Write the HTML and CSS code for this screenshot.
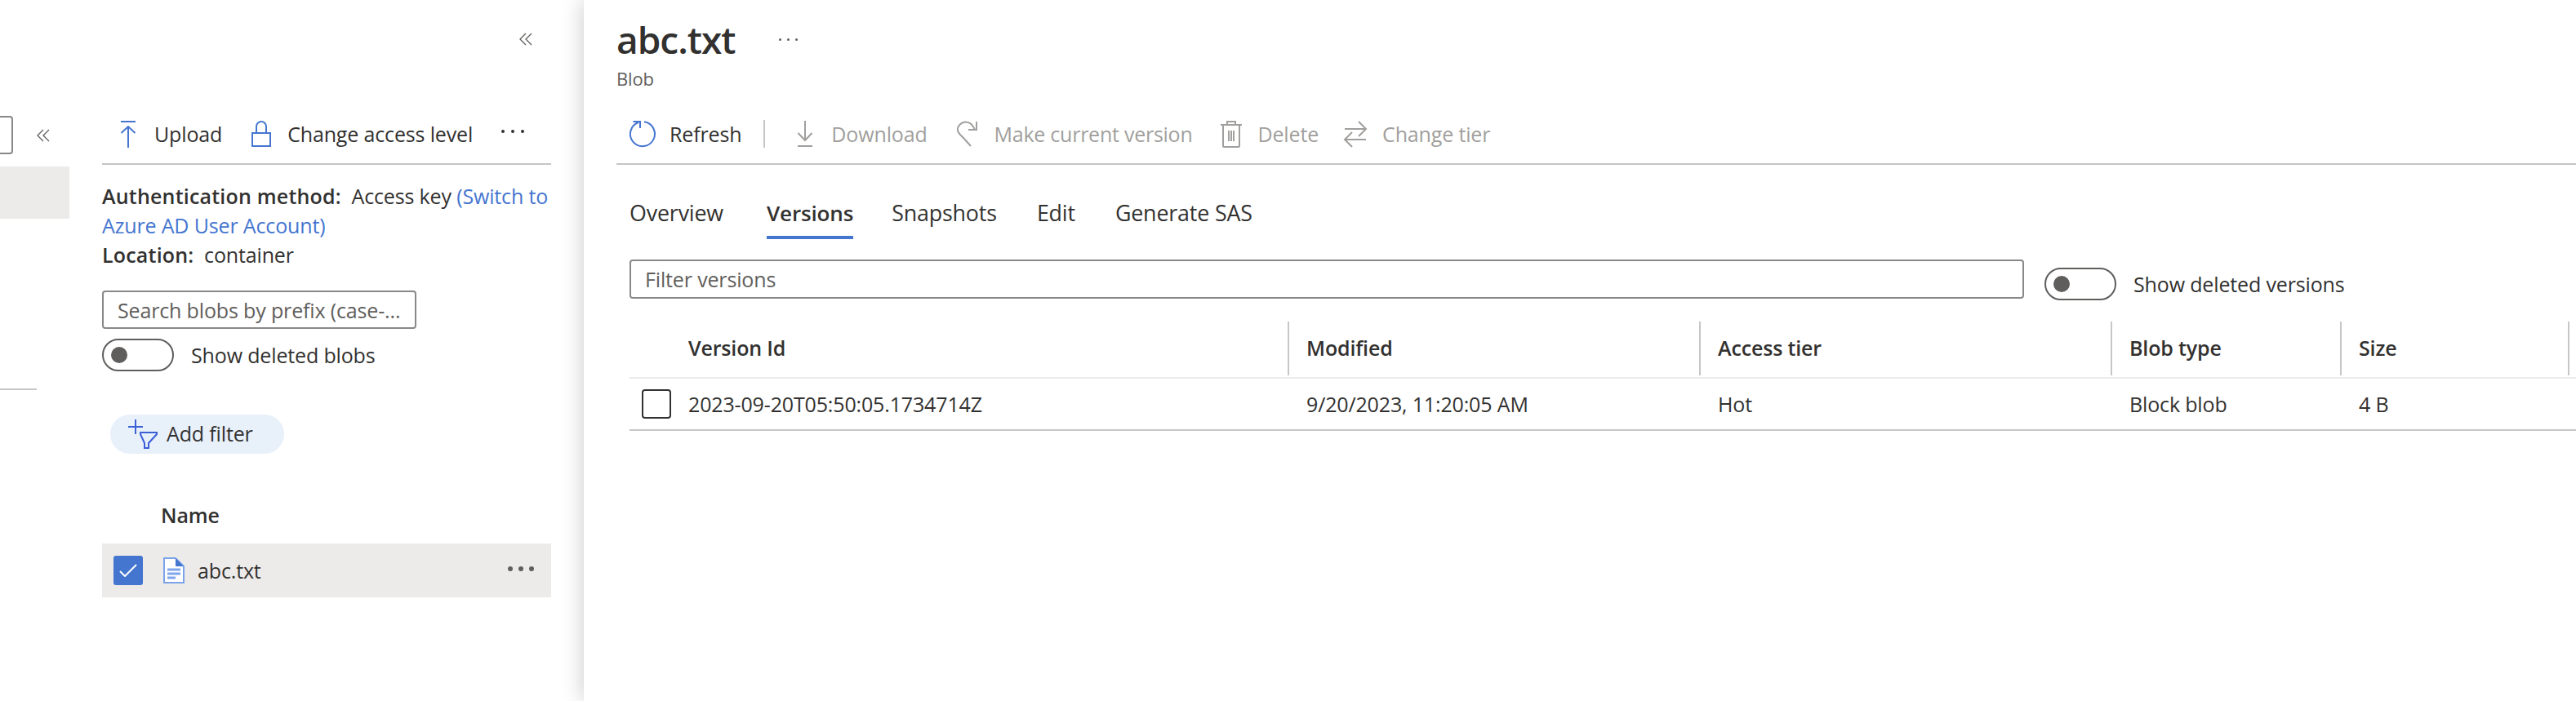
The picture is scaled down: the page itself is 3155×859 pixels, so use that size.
FILE: index.html
```html
<!DOCTYPE html>
<html lang="en">
<head>
<meta charset="utf-8">
<title>abc.txt</title>
<link rel="stylesheet" href="styles.css">
</head>
<body>
<div class="app">
  <nav class="nav">
    <div class="nav-top">
      <div class="nav-search"></div>
      <svg class="chev nav-chev" width="16" height="16" viewBox="0 0 16 16"><path d="M8 1 1 8l7 7M15 1 8 8l7 7"/></svg>
    </div>
    <div class="nav-selected"></div>
    <div class="nav-divider"></div>
  </nav>

  <section class="blobs">
    <div class="blobs-head">
      <svg class="chev" width="16" height="16" viewBox="0 0 16 16"><path d="M8 1 1 8l7 7M15 1 8 8l7 7"/></svg>
    </div>
    <div class="toolbar blobs-toolbar">
      <div class="tool">
        <svg class="ico ico-blue" width="20" height="34" viewBox="0 0 20 34"><path d="M1 2h18M10 8v26M1.500 16 10 8l8.500 8"/></svg>
        <span>Upload</span>
      </div>
      <div class="tool">
        <svg class="ico ico-blue" width="24" height="34" viewBox="0 0 24 34"><path d="M1 16h22v16H1zM6 16V8a6 6 0 0 1 12 0v8"/></svg>
        <span>Change access level</span>
      </div>
      <div class="tool-more">
        <i class="dot-s"></i><i class="dot-s"></i><i class="dot-s"></i>
      </div>
    </div>
    <div class="meta">
      <div><b>Authentication method:</b>&nbsp; Access key <a class="link">(Switch to</a></div>
      <div><a class="link">Azure AD User Account)</a></div>
      <div><b>Location:</b>&nbsp; container</div>
    </div>
    <div class="field search-field">Search blobs by prefix (case-...</div>
    <div class="toggle-row">
      <div class="toggle"><i class="knob"></i></div>
      <span>Show deleted blobs</span>
    </div>
    <div class="pill">
      <svg class="ico-filter" width="38" height="36" viewBox="0 0 38 36"><path d="M0 9h18M9 0v18"/><path d="M15 16h20v2l-10 11v6h-5v-6L15 18z"/></svg>
      <span class="pill-label">Add filter</span>
    </div>
    <div class="name-head">Name</div>
    <div class="blob-row">
      <div class="check-on">
        <svg width="22" height="16" viewBox="0 0 22 16"><path d="M1 9l6 6L21 1"/></svg>
      </div>
      <svg class="file" width="26" height="32" viewBox="0 0 26 32"><path class="file-body" d="M1 1h14l10 10v20H1z"/><path class="file-fold" d="M15 1l10 10H15z"/><path class="file-lines" d="M5 15h16M5 20h16M5 25h10"/></svg>
      <span class="blob-name">abc.txt</span>
      <div class="row-more"><i class="dot-m"></i><i class="dot-m"></i><i class="dot-m"></i></div>
    </div>
  </section>

  <main class="detail">
    <div class="title-row">
      <h1>abc.txt</h1>
      <div class="title-more"><i class="dot-t"></i><i class="dot-t"></i><i class="dot-t"></i></div>
    </div>
    <div class="subtitle">Blob</div>
    <div class="toolbar detail-toolbar">
      <div class="tool tool-main">
        <svg class="ico ico-blue" width="34" height="34" viewBox="0 0 34 34"><path d="M18 2.300A15 15 0 1 1 11 3M4.500 2H13v8"/></svg>
        <span>Refresh</span>
      </div>
      <div class="tool-sep"></div>
      <div class="tool off">
        <svg class="ico ico-grey" width="24" height="34" viewBox="0 0 24 34"><path d="M10 1v24M1.500 16 10 25l8.500-9M1 32h18"/></svg>
        <span>Download</span>
      </div>
      <div class="tool off">
        <svg class="ico ico-grey" width="29" height="34" viewBox="0 0 29 34"><path d="M25 2v10H15M23 12C20 5 16 2.500 12 2.500 6 2.500 1 8 2 13c.5 3 3 5 7 9l9 10"/></svg>
        <span class="tight">Make current version</span>
      </div>
      <div class="tool off">
        <svg class="ico ico-grey" width="27" height="34" viewBox="0 0 27 34"><path d="M0 6h26M3 6v26a1 1 0 0 0 1 1h18a1 1 0 0 0 1-1V6M8 6V2h10v4M10 13v13M13 13v13M16 13v13"/></svg>
        <span>Delete</span>
      </div>
      <div class="tool off">
        <svg class="ico ico-grey" width="30" height="34" viewBox="0 0 30 34"><path d="M2 11h26M19 2l9 9-9 9M28 24H2M11 15l-9 9 9 9"/></svg>
        <span>Change tier</span>
      </div>
    </div>
    <div class="tabs">
      <div class="tab">Overview</div>
      <div class="tab tab-on">Versions</div>
      <div class="tab">Snapshots</div>
      <div class="tab">Edit</div>
      <div class="tab">Generate SAS</div>
    </div>
    <div class="filter-row">
      <div class="field filter-field">Filter versions</div>
      <div class="toggle-row">
        <div class="toggle"><i class="knob"></i></div>
        <span>Show deleted versions</span>
      </div>
    </div>
    <div class="table">
      <div class="thead grid">
        <div class="th first">Version Id</div>
        <div class="th">Modified</div>
        <div class="th">Access tier</div>
        <div class="th">Blob type</div>
        <div class="th">Size</div>
      </div>
      <div class="tbody-row grid">
        <div class="td first"><div class="check-off"></div><span>2023-09-20T05:50:05.1734714Z</span></div>
        <div class="td">9/20/2023, 11:20:05 AM</div>
        <div class="td">Hot</div>
        <div class="td">Block blob</div>
        <div class="td">4 B</div>
      </div>
    </div>
  </main>
</div>
</body>
</html>
```
FILE: styles.css
```css
* { box-sizing: border-box; }
html, body { margin: 0; height: 100%; background: #fff; }
body {
  font-family: "Open Sans", "Noto Sans", "Liberation Sans", sans-serif;
  font-size: 25px;
  letter-spacing: -0.15px;
  color: #323130;
  overflow: hidden;
}
.app { display: flex; height: 859px; }

/* left navigation stub */
.nav { width: 85px; flex: none; padding-top: 142px; }
.nav-top { display: flex; align-items: center; height: 47px; }
.nav-search { width: 16px; height: 47px; border: 2px solid #8a8886; border-left: 0; border-radius: 0 4px 4px 0; }
.nav-chev { margin-left: 29px; }
.chev { flex: none; fill: none; stroke: #605e5c; stroke-width: 1.300; }
.nav-selected { height: 64px; margin-top: 15px; background: #edebe9; }
.nav-divider { width: 45px; height: 2px; margin-top: 208px; background: #c8c6c4; }

/* blob list */
.blobs { width: 630px; flex: none; padding: 0 40px; }
.blobs-head { display: flex; justify-content: flex-end; height: 148px; padding: 40px 23px 0 0; }
.toolbar { display: flex; align-items: center; height: 54px; padding-bottom: 20px; border-bottom: 2px solid #c8c6c4; }
.blobs-toolbar { padding-left: 22px; }
.tool { display: flex; align-items: center; gap: 22px; height: 34px; flex: none; }
.blobs-toolbar .tool + .tool { margin-left: 36px; gap: 20px; }
.ico { flex: none; fill: none; stroke-width: 2; }
.ico-blue { stroke: #4475cf; }
.ico-grey { stroke: #a19f9d; }
.tool-more { display: flex; gap: 8px; margin-left: 35px; padding-bottom: 6px; }
.dot-s { width: 4px; height: 4px; border-radius: 50%; background: #323130; }

.meta { margin-top: 20px; line-height: 36px; }
.meta b { font-weight: 600; letter-spacing: .2px; }
.link { color: #4475cf; }

.field { display: flex; align-items: center; border: 2px solid #8a8886; border-radius: 4px; color: #605e5c; }
.search-field { width: 385px; height: 47px; margin-top: 26px; padding-left: 17px; }
.toggle-row { display: flex; align-items: center; gap: 21px; }
.blobs .toggle-row { margin-top: 12px; }
.toggle { display: flex; align-items: center; width: 88px; height: 40px; padding-left: 9px; border: 2px solid #605e5c; border-radius: 20px; flex: none; }
.knob { width: 20px; height: 20px; border-radius: 50%; background: #605e5c; }

.pill { display: flex; align-items: center; gap: 9px; width: 213px; height: 48px; margin: 53px 0 0 10px; padding-left: 22px; border-radius: 24px; background: #e8f0fa; }
.pill-label { padding-bottom: 3px; }
.ico-filter { flex: none; fill: none; stroke: #3b5fd6; stroke-width: 2; }

.name-head { height: 34px; margin-top: 59px; padding-left: 72px; font-weight: 600; line-height: 32px; }
.blob-row { display: flex; align-items: center; height: 66px; margin-top: 17px; padding: 0 21px 0 14px; background: #edebe9; }
.check-on { display: flex; align-items: center; justify-content: center; width: 36px; height: 36px; border-radius: 3px; background: #4475cf; flex: none; }
.check-on svg { fill: none; stroke: #fff; stroke-width: 2; }
.file { margin-left: 25px; flex: none; }
.file-body { fill: #fff; stroke: #7aa3ea; stroke-width: 2; }
.file-fold { fill: #4475cf; }
.file-lines { fill: none; stroke: #7fa6ec; stroke-width: 3; }
.blob-name { margin-left: 16px; }
.row-more { display: flex; gap: 7px; margin-left: auto; padding-bottom: 4px; }
.dot-m { width: 6px; height: 6px; border-radius: 50%; background: #605e5c; }

/* blob detail */
.detail { flex: 1; min-width: 0; padding-left: 40px; box-shadow: 0 0 26px rgba(0, 0, 0, .22); position: relative; background: #fff; }
.title-row { display: flex; align-items: center; height: 56px; margin-top: 20px; }
h1 { margin: 0; font-size: 46px; font-weight: 600; letter-spacing: -1px; line-height: 56px; }
.title-more { display: flex; gap: 7px; margin-left: 53px; }
.dot-t { width: 3px; height: 3px; border-radius: 50%; background: #605e5c; }
.subtitle { height: 40px; color: #605e5c; font-size: 22px; line-height: 40px; }
.detail-toolbar { height: 54px; margin-top: 32px; padding-left: 16px; }
.detail-toolbar .tool { gap: 18px; }
.detail-toolbar .tool-main { gap: 15px; }
.detail-toolbar .off { margin-left: 35px; color: #a19f9d; }
.detail-toolbar .off:last-child { margin-left: 30px; }
.tight { letter-spacing: -0.25px; }
.tool-sep { width: 2px; height: 34px; margin-left: 27px; background: #c8c6c4; }
.detail-toolbar .tool-sep + .off { margin-left: 39px; }

.tabs { display: flex; gap: 49px; height: 116px; padding: 35px 0 0 16px; font-size: 26.8px; }
.tab { height: 56px; padding-top: 6px; line-height: 36px; }
.tab-on { margin: 0 -2px 0 4px; border-bottom: 4px solid #4475cf; font-size: 26px; font-weight: 600; }

.filter-row { display: flex; align-items: flex-start; margin-left: 16px; }
.filter-field { width: 1708px; height: 48px; padding-left: 17px; }
.filter-row .toggle-row { margin: 10px 0 0 25px; }

.table { margin: 26px 0 0 16px; }
.grid { display: grid; grid-template-columns: 808px 504px 504px 281px 279px; }
.thead { height: 70px; border-bottom: 2px solid #edebe9; }
.th { display: flex; align-items: center; height: 66px; padding: 0 0 2px 21px; border-right: 2px solid #c8c6c4; font-weight: 600; }
.th.first { padding-left: 72px; }
.tbody-row { height: 64px; border-bottom: 2px solid #c8c6c4; }
.td { display: flex; align-items: center; padding-left: 21px; }
.td.first { padding-left: 15px; }
.check-off { width: 36px; height: 36px; margin-right: 21px; border: 2px solid #323130; border-radius: 4px; flex: none; }
```
